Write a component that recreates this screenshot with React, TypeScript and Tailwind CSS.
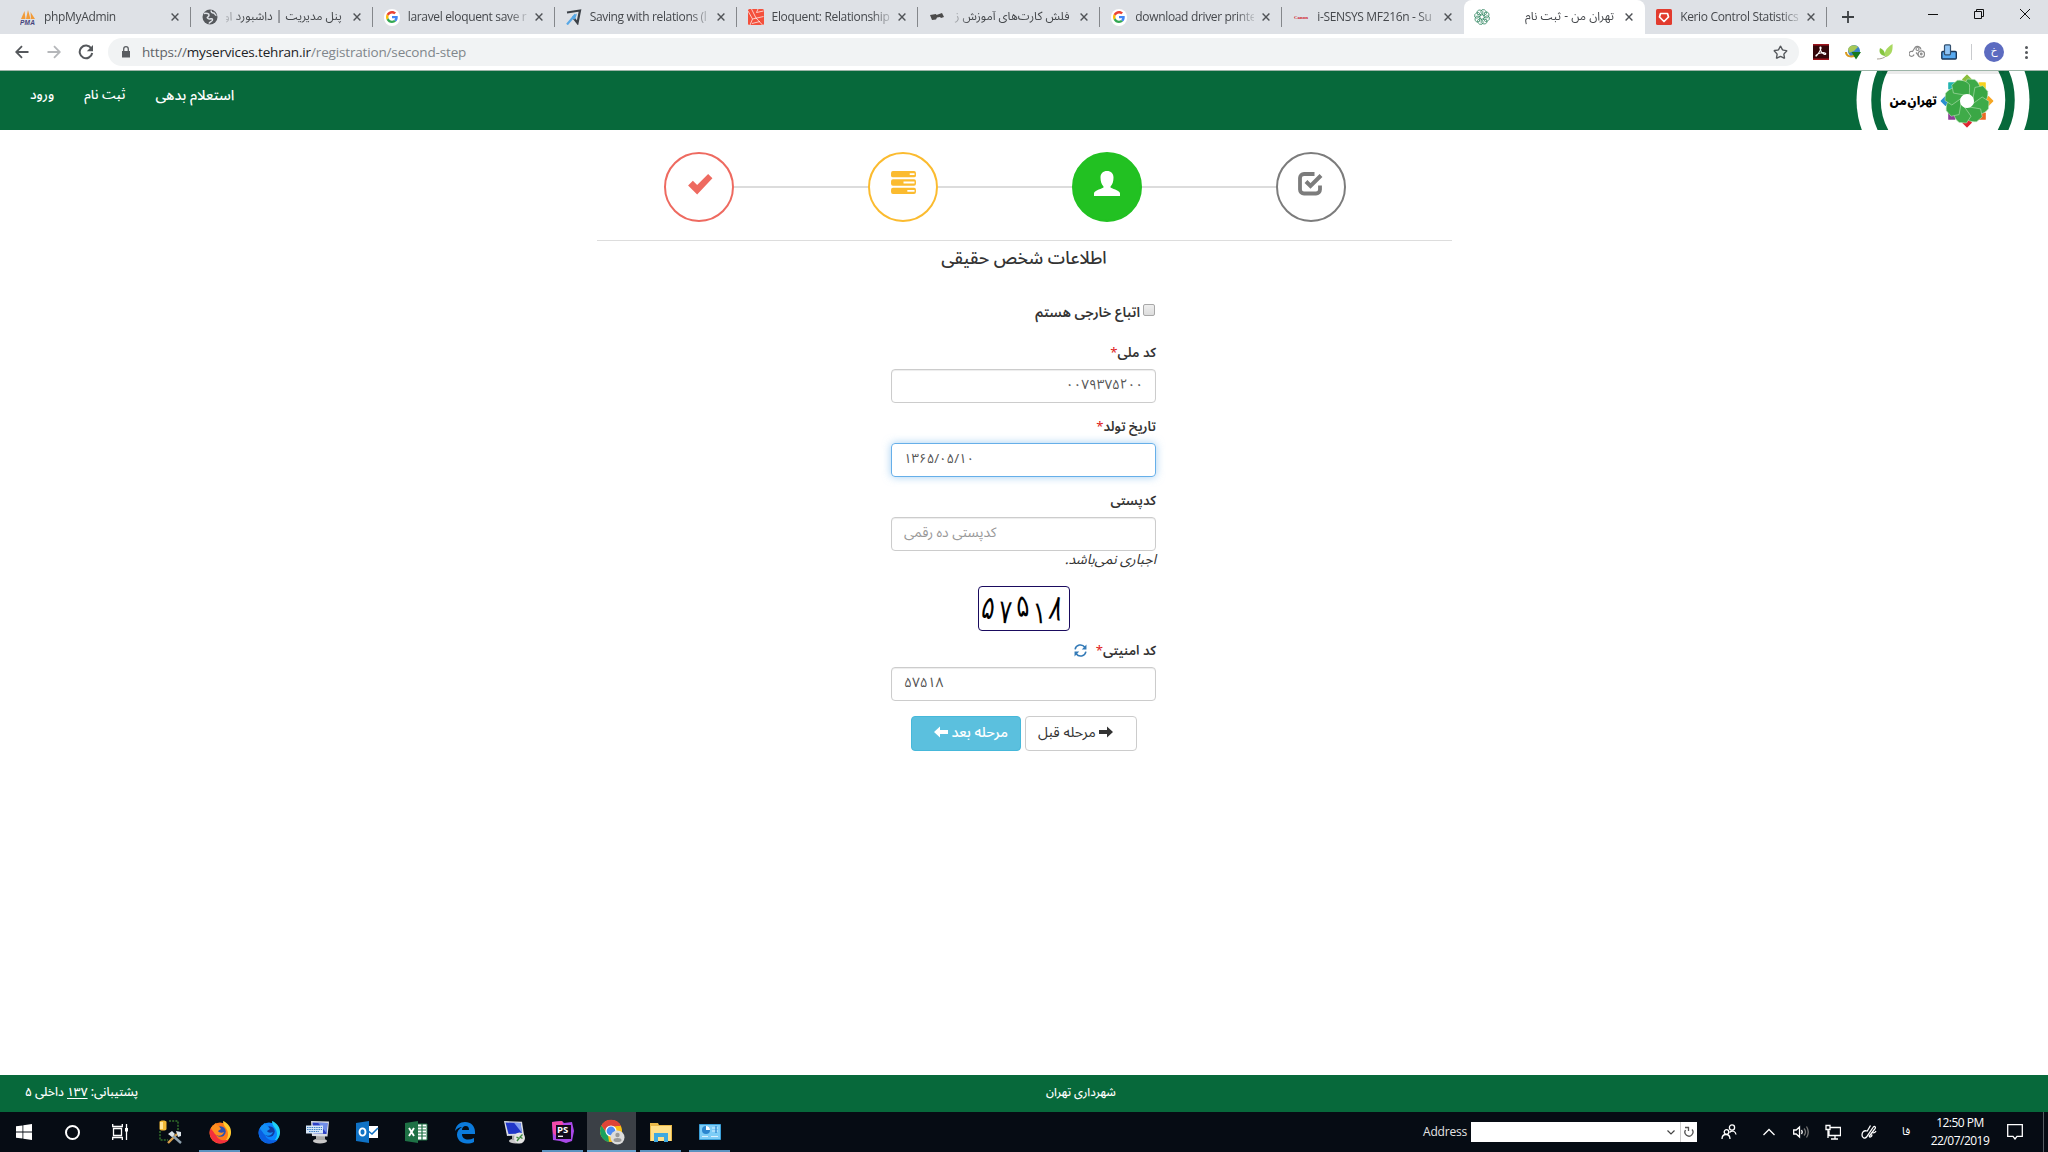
import React from "react";
import { Star, RotateCw } from "lucide-react";

function Google() {
  return (
    <span className="flex size-[17px] items-center justify-center rounded-full bg-white">
      <svg viewBox="0 0 48 48" className="size-3">
        <path fill="#ea4335" d="M24 9.5c3.5 0 6.7 1.2 9.2 3.6l6.9-6.9C35.900 2.400 30.500 0 24 0 14.600 0 6.500 5.400 2.600 13.200l8 6.200C12.400 13.700 17.700 9.500 24 9.500z" />
        <path fill="#4285f4" d="M47 24.500c0-1.600-.2-3.100-.4-4.500H24v9h12.900c-.6 3-2.200 5.500-4.700 7.200l7.700 6C44.400 38 47 31.800 47 24.500z" />
        <path fill="#fbbc05" d="M10.500 28.600c-.5-1.500-.8-3-.8-4.600s.3-3.100.8-4.600l-8-6.200C1 16.500 0 20.100 0 24s.9 7.500 2.600 10.800z" />
        <path fill="#34a853" d="M24 48c6.500 0 11.900-2.100 15.900-5.800l-7.700-6c-2.200 1.500-4.900 2.300-8.200 2.300-6.300 0-11.600-4.200-13.500-9.900l-8 6.200C6.500 42.600 14.600 48 24 48z" />
      </svg>
    </span>
  );
}

function Flower({ className, mono }: { className: string; mono?: boolean }) {
  const colors = ["#8bbf3d", "#f7d21e", "#f5a623", "#ea6a24", "#e02430", "#8e3f98", "#2a8fd0", "#22b5b0"];
  return (
    <svg viewBox="-27 -27 54 54" className={className}>
      {!mono &&
        colors.map((c, i) => (
          <rect key={c} x="-3.600" y="-25.100" width="7.200" height="7.200" rx="0.600" fill={c} transform={`rotate(${i * 45}) rotate(45 0 -21.500)`} />
        ))}
      {colors.map((c, i) => (
        <path
          key={c}
          d="M0 -6.500 L-9.500 -12.500 L-8 -20.500 L-1 -22.800 C4 -21.500 7.500 -18 8.500 -14 C7 -10 6 -8 4.500 -5 Z"
          fill={mono ? "none" : i % 2 ? "#3aa745" : "#3fab49"}
          stroke={mono ? "#3f8f6c" : "#c4e6bf"}
          strokeWidth={mono ? 2.4 : 0.5}
          transform={`rotate(${i * 45 + 22.5})`}
        />
      ))}
      {!mono && <circle r="7" fill="#fff" />}
    </svg>
  );
}

const icons: Record<string, React.ReactNode> = {
  pma: (
    <svg viewBox="0 0 16 16" className="size-4">
      <path d="M1 10 4.500 2l1 8zM6 10 8 1l2.500 9zM11 10l-.5-7L15 10z" fill="#f29b38" />
      <text x="0" y="15.500" fontSize="6.500" fontWeight="700" fontStyle="italic" fontFamily="Liberation Sans" fill="#44447c" textLength="15">PMA</text>
    </svg>
  ),
  globe: (
    <svg viewBox="0 0 16 16" className="size-4">
      <circle cx="8" cy="8" r="7.500" fill="#55585c" />
      <path d="M2 4.500c2.500-.5 5.500 0 5 2S4 8 6 9.500s4-1 4.500 1S8 12.500 7 14.500M9.500 1.500C8.500 3 10 4 11.500 4s1 2 3 2.500" fill="none" stroke="#dee1e6" strokeWidth="1.500" />
    </svg>
  ),
  google: <Google />,
  plane: (
    <svg viewBox="0 0 16 16" className="size-4">
      <path d="M1 3.500 14 1.500 11.500 14 8 9.500" fill="none" stroke="#3c4148" strokeWidth="2.200" />
      <path d="M1 15.500 9.500 5.500" stroke="#58a8e6" strokeWidth="2.200" />
      <path d="m6 7.500 5-3-2 6-2-.5z" fill="#58a8e6" />
    </svg>
  ),
  laravel: (
    <svg viewBox="0 0 16 16" className="size-4">
      <rect width="16" height="16" rx="1.500" fill="#f4503c" />
      <path d="M0 2 4.500 10 15.500 7.500M3.500 0 8 9M4.500 10 2 16M10 0 8.500 3.500l7-1.500M8 9l6.500 7M4 14.500l8-2" fill="none" stroke="#fff" strokeWidth=".7" />
    </svg>
  ),
  cards: (
    <svg viewBox="0 0 16 16" className="size-4">
      <path d="m1 6 6-1 .5 1L13 4l2 4-3 1-1-1-3 .5-1 2-4 .5z" fill="#4b4b4b" />
    </svg>
  ),
  canon: (
    <svg viewBox="0 0 16 16" className="size-4">
      <text x="1" y="9.600" fontSize="4.800" fontWeight="700" fontFamily="Liberation Serif" fill="#d0202c" textLength="14" lengthAdjust="spacingAndGlyphs">Canon</text>
    </svg>
  ),
  tehran: <Flower className="size-[18px] shrink-0" mono />,
  kerio: (
    <svg viewBox="0 0 16 16" className="size-4">
      <rect width="16" height="16" rx="1.500" fill="#e23b2e" />
      <path d="M4.500 4.500h7l1 3.500L8 12.500 3.500 8z" fill="none" stroke="#fff" strokeWidth="1.700" strokeLinejoin="round" />
    </svg>
  ),
};

const tabs = [
  { icon: "pma", title: "phpMyAdmin" },
  { icon: "globe", title: "پنل مدیریت | داشبورد او", rtl: true },
  { icon: "google", title: "laravel eloquent save r" },
  { icon: "plane", title: "Saving with relations (l" },
  { icon: "laravel", title: "Eloquent: Relationship" },
  { icon: "cards", title: "فلش کارت‌های آموزش ز", rtl: true },
  { icon: "google", title: "download driver printe" },
  { icon: "canon", title: "i-SENSYS MF216n - Su" },
  { icon: "tehran", title: "تهران من - ثبت نام", rtl: true, active: true },
  { icon: "kerio", title: "Kerio Control Statistics" },
];

const fade: Record<string, string> = {
  ltr: "ml-2 w-[119px] shrink-0 font-['Open_Sans',sans-serif] text-[12px] tracking-[-0.34px] whitespace-nowrap text-[#45484c] [mask-image:linear-gradient(to_right,#000_84%,rgba(0,0,0,0.2))]",
  rtl: "ml-2 w-[116px] shrink-0 font-['Noto_Sans_Arabic','DejaVu_Sans',sans-serif] text-[11.900px] whitespace-nowrap text-[#45484c] [mask-image:linear-gradient(to_left,#000_86%,rgba(0,0,0,0.2))]",
};

function Tabs() {
  return (
    <div className="flex h-[34px] bg-[#dee1e6] pl-[9px]">
      {tabs.map((t, i) => (
        <div
          key={i}
          className={
            t.active
              ? "flex h-[34px] w-[181px] items-center rounded-t-lg bg-white pr-[12px] pl-[10px]"
              : "relative flex h-[34px] w-[181.900px] items-center pr-[12px] pl-[11px]"
          }
        >
          <span className="flex w-4 shrink-0 justify-center">{icons[t.icon]}</span>
          <span dir={t.rtl ? "rtl" : "ltr"} className={t.rtl ? fade.rtl : fade.ltr}>
            {t.title}
          </span>
          <svg viewBox="0 0 8 8" className="ml-auto size-2 shrink-0">
            <path d="m.6.6 6.800 6.800M7.400.6.6 7.400" stroke="#505357" strokeWidth="1.400" />
          </svg>
          {!t.active && i !== 7 && <span className="absolute top-[7px] right-0 h-5 w-px bg-[#84878b]" />}
        </div>
      ))}
      <svg viewBox="0 0 12 12" className="mt-[11px] ml-[15px] size-3">
        <path d="M6 0v12M0 6h12" stroke="#3c4043" strokeWidth="1.800" />
      </svg>
      <div className="ml-auto flex gap-[36px] pt-[9px] pr-[18px]">
        <svg viewBox="0 0 10 10" className="size-2.5"><path d="M0 5.500h10" stroke="#111" /></svg>
        <svg viewBox="0 0 10 10" className="size-2.5"><path d="M.5 2.500h7v7h-7zM2.500 2.500v-2h7v7h-2" fill="none" stroke="#111" /></svg>
        <svg viewBox="0 0 10 10" className="size-2.5"><path d="m0 0 10 10M10 0 0 10" stroke="#111" /></svg>
      </div>
    </div>
  );
}

function NavArrow({ className }: { className: string }) {
  return (
    <svg viewBox="0 0 14 14" className={className}>
      <path d="M13.500 7H1.500M7 1.200 1.200 7 7 12.800" fill="none" stroke="currentColor" strokeWidth="1.800" />
    </svg>
  );
}

function Toolbar() {
  return (
    <div className="flex h-[37px] items-center border-b border-[#9db5a8] bg-white pl-[15px]">
      <NavArrow className="size-3.5 text-[#55585c]" />
      <NavArrow className="ml-[18px] size-3.5 rotate-180 text-[#b5b7ba]" />
      <svg viewBox="0 0 16 16" className="ml-[17px] size-4">
        <path d="M13.300 4.500A6.300 6.300 0 1 0 14.200 9" fill="none" stroke="#55585c" strokeWidth="2" />
        <path d="M15 1v6.200H8.800z" fill="#55585c" />
      </svg>
      <div className="ml-[14px] flex h-7 w-[1691px] items-center rounded-full bg-[#f1f3f4] pr-[11px] pl-[13px]">
        <svg viewBox="0 0 10 12" className="h-3 w-2.5"><path d="M1 5h8v6.500H1z" fill="#5a5d61" /><path d="M2.700 5V3a2.300 2.300 0 0 1 4.600 0v2" fill="none" stroke="#5a5d61" strokeWidth="1.300" /></svg>
        <span className="ml-[11px] font-['Open_Sans',sans-serif] text-[13.500px] tracking-[-0.160px] text-[#80868b]">
          <span className="text-[#5f6368]">https://</span>
          <span className="text-[#202124]">myservices.tehran.ir</span>/registration/second-step
        </span>
        <Star className="ml-auto size-[15px] text-[#55585c]" strokeWidth={2.2} />
      </div>
      <div className="ml-[14px] flex items-center gap-4">
        <svg viewBox="0 0 16 16" className="size-4">
          <path d="M0 0h16v16H0z" fill="#34070a" /><path d="M0 0h16v1.500H0zM0 14.500h16V16H0z" fill="#a0141c" />
          <path d="M7.500 3c1.500 0 0 4-4 9-1.500.5-.5-2 4-3s6 .5 5 1.200-4-.9-5-4.200S7 3 7.500 3" fill="none" stroke="#fff" strokeWidth="1.100" />
        </svg>
        <svg viewBox="0 0 16 16" className="size-4">
          <circle cx="9" cy="7" r="6" fill="#3b83c9" /><path d="M3 5c3-5 8-4 10-2L9 7 4 9z" fill="#a8c957" />
          <path d="M1 8c0 5 7 6 11 2" fill="none" stroke="#d99b20" strokeWidth="2" /><path d="M6.500 8H16l-5 7.500z" fill="#187a1d" />
        </svg>
        <svg viewBox="0 0 16 16" className="size-4">
          <path d="M9 13C6 9 9 4 15.500 0c.5 7-1 11-6.500 13" fill="#a9d860" /><path d="M8 12C2 11 2 7 3 4c4 2 5 4 5 8" fill="#86c540" /><path d="M0 15c4 0 7-1 9-3" fill="none" stroke="#a8a095" />
        </svg>
        <svg viewBox="0 0 16 16" className="size-4">
          <g fill="none" stroke="#8b8b8b" strokeWidth="1.200"><path d="M5 10.500a2.500 2.500 0 1 1-1.500-3L6 3.500a3.500 3.500 0 0 1 6 2" /><circle cx="12.300" cy="10" r="3.200" /><circle cx="8.500" cy="5" r="1.500" /><path d="M7 8.500 10 12" /><circle cx="12.300" cy="10" r=".8" /></g>
        </svg>
        <svg viewBox="0 0 16 16" className="size-4">
          <rect x=".8" y="7.500" width="14.500" height="7.500" rx="1" fill="#57a9f0" stroke="#17365a" strokeWidth="1.400" />
          <rect x="3.500" y=".8" width="6" height="10" rx="1" fill="#8fc4f5" stroke="#34506e" strokeWidth="1.200" />
        </svg>
      </div>
      <div className="ml-[14px] h-4 w-px bg-[#c9cbce]" />
      <div className="ml-3 flex size-5 items-center justify-center rounded-full bg-[#5c6bc0] font-['DejaVu_Sans',sans-serif] text-[11px] leading-none text-white">
        <span className="-mt-1">خ</span>
      </div>
      <div className="ml-[21px] flex flex-col gap-0.5">
        <span className="size-[3px] rounded-full bg-[#55585c]" />
        <span className="size-[3px] rounded-full bg-[#55585c]" />
        <span className="size-[3px] rounded-full bg-[#55585c]" />
      </div>
    </div>
  );
}

function Header() {
  return (
    <header className="flex h-[59px] items-start justify-between overflow-hidden bg-[#07693b]">
      <nav dir="rtl" className="flex gap-[30px] pt-[14px] pl-[30px] font-['Noto_Sans_Arabic','DejaVu_Sans',sans-serif] text-[13.200px] leading-5 font-medium whitespace-nowrap text-white">
        <a className="text-[14.200px]">استعلام بدهی</a>
        <a>ثبت نام</a>
        <a className="text-[13.500px]">ورود</a>
      </nav>
      <div className="relative mr-[18px] h-[59px] w-[174px]">
        <svg viewBox="0 0 174 59" className="h-[59px] w-[174px]">
          <circle cx="87" cy="29" r="86.500" fill="#fff" />
          <circle cx="87" cy="29" r="67" fill="none" stroke="#07693b" strokeWidth="9.500" />
          <path d="M26 0h122v3H26z" fill="#000" opacity=".08" />
        </svg>
        <div className="absolute inset-0 flex items-center pl-[33px]">
          <span dir="rtl" className="mt-0.5 w-[48px] font-['Noto_Sans_Arabic','DejaVu_Sans',sans-serif] text-[11.600px] font-black [word-spacing:-2px] whitespace-nowrap text-black">تهرانِ من</span>
          <Flower className="mt-px ml-[3px] size-[54px]" />
        </div>
      </div>
    </header>
  );
}

function Steps() {
  const ring = "flex size-[70px] items-center justify-center rounded-full border-2 bg-white pb-1";
  const line = "h-0.5 w-[134px] bg-[#dcdcdc]";
  return (
    <div className="flex items-center justify-center pt-[22px] pr-[38px]">
      <div className={`${ring} border-[#ee6a60] pl-[2px]`}>
        <svg viewBox="0 0 26 22" className="-mt-px h-[21px] w-[25px]"><path d="m0 12 5-5 4.500 4.500L21 0l4.500 4.500-16 17z" fill="#ee6a60" /></svg>
      </div>
      <div className={line} />
      <div className={`${ring} border-[#fbbb2f]`}>
        <svg viewBox="0 0 26 24" className="-mt-[5px] h-[23px] w-[25px]">
          <g fill="#fbbb2f"><rect width="26" height="6.600" rx="2" /><rect y="8.700" width="26" height="6.600" rx="2" /><rect y="17.400" width="26" height="6.600" rx="2" /></g>
          <path d="M19.500 2.300h5v2h-5zM13 11h11.500v2H13zM17 19.700h7.500v2H17z" fill="#fff" />
        </svg>
      </div>
      <div className={line} />
      <div className={`${ring} border-[#22c122] !bg-[#22c122]`}>
        <svg viewBox="0 0 26 25" className="-mt-1 h-[25px] w-[26px]"><path d="M6.500 6.500C6.500 2.500 9 0 13 0s6.500 2.500 6.500 6.500c0 4-1 7-3 9v1c4 2 9.500 3.500 9.500 6V25H0v-2.500c0-2.500 5.500-4 9.500-6v-1c-2-2-3-5-3-9z" fill="#fff" /></svg>
      </div>
      <div className={line} />
      <div className={`${ring} border-[#7c7c7c] pr-[2px]`}>
        <svg viewBox="0 0 25 24" className="-mt-0.5 h-6 w-[25px]">
          <path d="M16.500 2H6a4 4 0 0 0-4 4v11.500a4 4 0 0 0 4 4h12a4 4 0 0 0 4-4v-4" fill="none" stroke="#7c7c7c" strokeWidth="3.800" />
          <path d="m8 9.500 4.500 4.500L23 3.500" fill="none" stroke="#7c7c7c" strokeWidth="4" />
        </svg>
      </div>
    </div>
  );
}

const label = "h-[27px] pt-[3px] text-[13.200px] leading-4 font-semibold text-[#333]";
const box = "flex h-[34px] items-start rounded border border-[#ccc] px-3 pt-[6px] text-[13.800px] leading-[18px] text-[#555] shadow-[inset_0_1px_1px_rgba(0,0,0,0.075)]";

function Arrow({ flip }: { flip?: boolean }) {
  return (
    <svg viewBox="0 0 14 12" className={flip ? "h-3 w-3.5 rotate-180" : "h-3 w-3.5"}>
      <path d="M14 6 8 .5V4H0v4h8v3.500z" fill="currentColor" />
    </svg>
  );
}

function Form() {
  return (
    <form dir="rtl" className="ml-[891px] w-[265px] pt-[31px] font-['Noto_Sans_Arabic','DejaVu_Sans',sans-serif]">
      <div className="flex h-[40px] items-start gap-[3px]">
        <span className="mt-[2px] mr-[1px] size-[12px] rounded-[2px] border border-[#a8a8a8] bg-gradient-to-b from-[#eee] to-[#ddd]" />
        <span className="pt-[3px] text-[13.800px] leading-4 font-semibold whitespace-nowrap text-[#333]">اتباع خارجی هستم</span>
      </div>
      <div className={label}>کد ملی<span className="font-normal text-[#e02020]">*</span></div>
      <div className={box}><span className="text-[13.500px]">۰۰۷۹۳۷۵۲۰۰</span></div>
      <div className="h-[13px]" />
      <div className={label}>تاریخ تولد<span className="font-normal text-[#e02020]">*</span></div>
      <div className={`${box} !border-[#66afe9] !shadow-[0_0_8px_rgba(102,175,233,0.6)]`}><bdo dir="ltr" className="mr-auto text-[13.200px]">۱۳۶۵/۰۵/۱۰</bdo></div>
      <div className="h-[13px]" />
      <div className={label}>کدپستی</div>
      <div className={box}><span className="mr-auto text-[#999]">کدپستی ده رقمی</span></div>
      <div className="h-[35px] text-[13.900px] leading-[18px] text-[#333] italic">اجباری نمی‌باشد.</div>
      <div dir="ltr" className="mx-auto flex h-[45px] w-[92px] items-center gap-[3px] rounded border border-[#1a0b5e] pl-[3px] font-['DejaVu_Sans',sans-serif] text-[24px] leading-none font-medium text-black">
        <span className="w-[14px] -translate-y-px scale-y-[1.35] rotate-[12deg]">۵</span>
        <span className="w-[14px] translate-y-[3px] scale-y-[1.4] rotate-[4deg]">۷</span>
        <span className="w-[14px] -translate-y-[3px] scale-y-[1.3] rotate-[-6deg]">۵</span>
        <span className="w-[14px] translate-y-[4px] scale-y-[1.3] rotate-[-4deg]">۱</span>
        <span className="w-[14px] -translate-y-px scale-y-[1.5] rotate-[12deg]">۸</span>
      </div>
      <div className="h-[9px]" />
      <div className={`${label} flex items-start`}>
        کد امنیتی<span className="font-normal text-[#e02020]">*</span>
        <svg viewBox="0 0 12 12" className="mt-[1px] mr-[9px] size-[13px]">
          <path d="M1 5a5 5 0 0 1 9-2M11 7a5 5 0 0 1-9 2" fill="none" stroke="#337ab7" strokeWidth="1.400" />
          <path d="M11.500.5V5H7.200zM.5 11.500V7h4.300z" fill="#337ab7" />
        </svg>
      </div>
      <div className={box}><span className="mr-auto">۵۷۵۱۸</span></div>
      <div className="flex gap-1 pt-[15px] pr-[19px]">
        <div className="flex h-[35px] w-[112px] items-start justify-end gap-[3px] rounded border border-[#ccc] pt-[7px] pl-3 text-[14.300px] leading-[18px] whitespace-nowrap text-[#333]">
          <span className="pt-[2px]"><Arrow /></span>مرحله قبل
        </div>
        <div className="flex h-[35px] w-[110px] items-start gap-[3px] rounded border border-[#46b8da] bg-[#5bc0de] pt-[7px] pr-3 text-[14.300px] leading-[18px] font-medium whitespace-nowrap text-white">
          مرحله بعد<span className="pt-[2px]"><Arrow flip /></span>
        </div>
      </div>
    </form>
  );
}

function Firefox({ blue }: { blue?: boolean }) {
  return (
    <svg viewBox="0 0 24 24" className="size-6">
      <circle cx="12" cy="13" r="10.500" fill={blue ? "#0a84ff" : "#ff7a1a"} />
      <path d="M15 1c5 2 8.500 6.500 8 12-.5 6-5 10-11 10 5-1 8-4 8-9 0-6-5-7-5-13z" fill={blue ? "#1fd0f5" : "#ffcb2f"} />
      <path d="M2 9c-2 8 4 14.500 10 14.500 4 0 7-1.500 9-4-6 2-12 0-13-5-2-1-3-5-6-5.500z" fill={blue ? "#0a5fe0" : "#f3303c"} />
      <circle cx="12.500" cy="11.500" r="5.200" fill={blue ? "#123a9c" : "#2c50b0"} />
      <path d="M3 8c2-3 4-3 4-5 2 2 4 3 6 6l-3 2c1 2 4 2 6 1-1 4-6 5-9 2z" fill={blue ? "#1590f5" : "#ff8f20"} />
    </svg>
  );
}

function Monitor({ variant }: { variant: "keys" | "remote" }) {
  return (
    <svg viewBox="0 0 24 24" className="size-6">
      <ellipse cx="14" cy="21" rx="7" ry="2.500" fill="#c9c9c9" />
      <path d="M10 15h9v5h-9z" fill="#a9a9a9" />
      {variant === "keys" ? (
        <g>
          <path d="m5 1 18 .5-1.500 15L6 16z" fill="#d8dbe3" /><path d="m6.500 2.500 15 .5-1 11-13-.5z" fill="#2b3fc4" /><path d="m12 2.700 9.500.3-1 10z" fill="#6f8de8" />
          <path d="M0 5.500h17v8H0z" fill="#d6e7f8" /><path d="M1 7.500h15M1 9.500h15M3 11.500h10" stroke="#3e7ec5" strokeWidth="1.200" strokeDasharray="1.500 .8" />
        </g>
      ) : (
        <g>
          <path d="m2 1 18 .8 2 13.200-17 1z" fill="#d8dbe3" /><path d="m3.500 2.500 15 .5 1.500 10.500-13.500.5z" fill="#2036c8" /><path d="m12 2.800 6.500.2 1.500 10z" fill="#7f9cf0" />
          <circle cx="17.500" cy="18" r="5.500" fill="#e4e4e4" /><path d="m14.500 17 2.500 1.500-2 2.500M20.500 14.500 18 17l2.500 1.500" fill="none" stroke="#3d8b3d" strokeWidth="1.400" />
        </g>
      )}
    </svg>
  );
}

const apps: { el: React.ReactNode; open?: boolean; active?: boolean }[] = [
  {
    el: (
      <svg viewBox="0 0 24 24" className="size-6">
        <path d="M10 1h9v9M1 11v9h8" fill="none" stroke="#48a035" strokeWidth="1" strokeDasharray="2 1.200" />
        <path d="M.5 2c0-2 7-2 7 0v7c0 2-7 2-7 0z" fill="#f1b935" /><path d="M1 2h3v7H1z" fill="#ffe59a" />
        <path d="m9 23 9-9" stroke="#d7a04c" strokeWidth="2.400" /><path d="m13 15 9 8" stroke="#8ea0ad" strokeWidth="2.400" />
        <path d="m9 14 4-3 3 3-3 3zM17 11l5 1v4l-3 1z" fill="#dbe3e8" />
      </svg>
    ),
  },
  { el: <Firefox />, open: true },
  { el: <Firefox blue /> },
  { el: <Monitor variant="keys" /> },
  {
    el: (
      <svg viewBox="0 0 24 24" className="size-6">
        <path d="M12 6h11v12H12z" fill="#fff" /><path d="m12 10 5 4 6-6" fill="none" stroke="#0f72c5" strokeWidth="1.600" />
        <path d="M1 3 14 1v22L1 21z" fill="#0f72c5" /><ellipse cx="7.500" cy="12" rx="3" ry="3.600" fill="none" stroke="#fff" strokeWidth="1.900" />
      </svg>
    ),
  },
  {
    el: (
      <svg viewBox="0 0 24 24" className="size-6">
        <path d="M12 4h11v16H12z" fill="#fff" stroke="#1e7145" /><path d="M13 7h9M13 10h9M13 13h9M13 16h9M18 4v16" stroke="#1e7145" strokeWidth="1.200" />
        <path d="M1 3 14 1v22L1 21z" fill="#1e7145" /><path d="m5 8 5 8M10 8l-5 8" stroke="#fff" strokeWidth="1.900" />
      </svg>
    ),
  },
  {
    el: (
      <svg viewBox="0 0 24 24" className="size-6">
        <path d="M2 11C3 5 7 2 12 2c6 0 10 4 10 10v2H9c0 4 3 5.500 6 5.500 2 0 4-.5 6-1.500v4c-2 1-4 1.500-7 1.500-6 0-10-4-10-9 0-3 2-6 5-7.500C7 7 4 8.500 2 11zm7-1h7c0-2.500-1-4-3.300-4S9 8 9 10z" fill="#0b7bdc" />
      </svg>
    ),
  },
  { el: <Monitor variant="remote" /> },
  {
    el: (
      <svg viewBox="0 0 24 24" className="size-6">
        <path d="m1 2 10-1 2 2 8-1 2 9-2 10-6 2-6-2-7-1z" fill="#a948e8" /><path d="m1 2 10-1 2 6-8 9-3-3z" fill="#f24aa8" />
        <path d="M5 5h15v14H5z" fill="#100a18" />
        <text x="6" y="13" fontSize="9.500" fontWeight="700" fontFamily="Open Sans" fill="#fff">PS</text><path d="M7 16.300h5" stroke="#fff" strokeWidth="1.300" />
      </svg>
    ),
    open: true,
  },
  {
    el: (
      <svg viewBox="0 0 26 26" className="size-[26px]">
        <circle cx="12" cy="12" r="11" fill="#fbc116" /><path d="M2.500 6.500A11 11 0 0 1 21.500 6.500L12 8z" fill="#de4437" /><path d="M1 12a11 11 0 0 1 1.500-5.500L9 16l1 7A11 11 0 0 1 1 12" fill="#1aa15f" /><path d="M2.500 6.500A11 11 0 0 1 22 7H12a5 5 0 0 0-5 6z" fill="#de4437" />
        <circle cx="12" cy="12" r="5" fill="#4b8bf5" stroke="#fff" strokeWidth="1.200" />
        <circle cx="18.500" cy="18.500" r="7" fill="#dcdcdc" /><circle cx="18.500" cy="16" r="2.200" fill="#999" /><ellipse cx="18.500" cy="21" rx="4" ry="2" fill="#999" />
      </svg>
    ),
    open: true,
    active: true,
  },
  {
    el: (
      <svg viewBox="0 0 24 24" className="size-6">
        <path d="M1 3h8l1 2h13v16H1z" fill="#e9b949" /><path d="M2 6h20v15H2z" fill="#ffe08a" /><path d="M5 13h14v9h-4v-5H9v5H5z" fill="#3fa9e0" />
      </svg>
    ),
    open: true,
  },
  {
    el: (
      <svg viewBox="0 0 24 24" className="size-6">
        <path d="M1.500 4.500h21v15h-21z" fill="#7dcdf6" stroke="#3a9fd8" /><circle cx="8" cy="10" r="4" fill="#2b86cf" /><path d="M8 10V6a4 4 0 0 1 4 4z" fill="#fff" /><path d="M14 8h6M14 11h6M4 16.500h6M13 16.500h7" stroke="#d9f1ff" strokeWidth="1.200" /><path d="M18 6v7" stroke="#2b86cf" strokeWidth="1.300" />
      </svg>
    ),
    open: true,
  },
];

function Taskbar() {
  const s = { fill: "none", stroke: "#fff", strokeWidth: 1.3 };
  return (
    <div className="flex h-10 items-stretch bg-[#060c14] font-['Open_Sans',sans-serif] text-[12px] text-white">
      <div className="flex w-12 items-center justify-center">
        <svg viewBox="0 0 16 16" className="size-4"><path d="M0 2.300 6.500 1.400v6.100H0zM7.300 1.300 16 0v7.500H7.300zM0 8.400h6.500v6.200L0 13.700zM7.300 8.400H16V16l-8.700-1.300z" fill="#fff" /></svg>
      </div>
      <div className="flex w-12 items-center justify-center"><span className="size-[15px] rounded-full border-2 border-white" /></div>
      <div className="flex w-[50px] items-center justify-center pr-[3px]">
        <svg viewBox="0 0 16 16" className="size-4"><path d="M1.500 4.500h8v7h-8zM.7 0v2.500h9.600V0M.7 16v-2.500h9.600V16M14.500 0v16" {...s} /><path d="M13 4h3v3.500h-3z" fill="#fff" /></svg>
      </div>
      {apps.map((a, i) => (
        <div key={i} className={a.active ? "relative flex w-[49px] items-center justify-center bg-[#3b4046]" : "relative flex w-[49px] items-center justify-center"}>
          {a.el}
          {a.open && <span className={a.active ? "absolute inset-x-0 bottom-0 h-0.5 bg-[#6ba3cf]" : "absolute inset-x-1 bottom-0 h-0.5 bg-[#5b92bf]"} />}
        </div>
      ))}
      <div className="ml-auto flex items-center">
        <span className="w-[48px] tracking-[-0.200px] text-[#e4e4e4]">Address</span>
        <div className="flex h-5 w-[226px] items-center justify-end bg-white">
          <svg viewBox="0 0 8 5" className="mr-[5px] h-[5px] w-2"><path d="m.5.5 3.500 3.500L7.500.5" fill="none" stroke="#444" strokeWidth="1.200" /></svg>
          <span className="flex h-5 w-[17px] items-center justify-center border-l border-[#ccc]">
            <svg viewBox="0 0 10 12" className="h-3 w-2.5"><path d="M1.500 4a4 4 0 1 0 6.500-.5M1 1.500h3.500V5" fill="none" stroke="#555" strokeWidth="1.300" /></svg>
          </span>
        </div>
        <svg viewBox="0 0 16 16" className="ml-6 size-4"><circle cx="5.500" cy="8" r="2.300" {...s} /><circle cx="11" cy="3.500" r="2.600" {...s} /><path d="M1 15c0-6 8-6 8 0M8.500 8.500c3-3 6-1 6.500 2" {...s} /></svg>
        <svg viewBox="0 0 12 8" className="ml-[26px] h-2 w-3"><path d="m.5 7 5.500-5.500L11.500 7" {...s} /></svg>
        <svg viewBox="0 0 16 14" className="ml-[18px] h-3.5 w-4"><path d="M.7 5h2.500L6.500 2v10L3.200 9H.7zM8.500 5q1.500 2 0 4" {...s} /><path d="M11 3.500q3 3.500 0 7M13.500 1.500q3.500 5.500 0 11" {...s} stroke="#777" /></svg>
        <svg viewBox="0 0 16 16" className="ml-4 size-4"><path d="M5.500 3.500h10v8H4v-5M10 11.500V15M6 15h7M1 1.500h4v4H1zM3 5.500V14" {...s} /></svg>
        <svg viewBox="0 0 16 16" className="ml-5 size-4"><path d="M6 7c-3-1-5 1-5 4s3 4 4.500 2L12 3.500c1-2 3-1 2.200.8L8 12.500M9.500 1.500 6 7.500M15 7c-1 2-2.500 2-3.500 1.500M8 12.500c1 1.500 3 0 3-2" {...s} /></svg>
        <span className="ml-[25px] w-3 font-['Noto_Sans_Arabic','DejaVu_Sans',sans-serif] text-[11px]">فا</span>
        <div className="ml-[15px] w-[62px] text-center text-[12px] leading-[18px] tracking-[-0.500px] whitespace-nowrap"><div>12:50 PM</div><div>22/07/2019</div></div>
        <svg viewBox="0 0 16 16" className="ml-[16px] size-4"><path d="M.7.7h14.600v11.600H10L8 15l-2-2.700H.7z" {...s} /></svg>
        <span className="mr-1 ml-[20px] h-10 w-px bg-[#555b61]" />
      </div>
    </div>
  );
}

export default function App() {
  return (
    <div className="flex h-[1152px] w-[2048px] flex-col overflow-hidden bg-white">
      <Tabs />
      <Toolbar />
      <Header />
      <main className="flex-1">
        <Steps />
        <div className="mx-auto mt-[18px] h-px w-[855px] bg-[#ddd]" />
        <h1 dir="rtl" className="mt-[6px] h-[24px] text-center font-['Noto_Sans_Arabic','DejaVu_Sans',sans-serif] text-[17.400px] leading-6 font-medium text-[#333]">اطلاعات شخص حقیقی</h1>
        <Form />
      </main>
      <footer className="grid h-[37px] grid-cols-[1021px_1fr] bg-[#07693b] pl-[25px] font-['Noto_Sans_Arabic','DejaVu_Sans',sans-serif] text-[11.500px] leading-[35px] font-medium whitespace-nowrap text-white">
        <span dir="rtl" className="justify-self-start text-[12px]">پشتیبانی: <u className="underline-offset-2">۱۳۷</u> داخلی ۵</span>
        <span dir="rtl" className="justify-self-start">شهرداری تهران</span>
      </footer>
      <Taskbar />
    </div>
  );
}
